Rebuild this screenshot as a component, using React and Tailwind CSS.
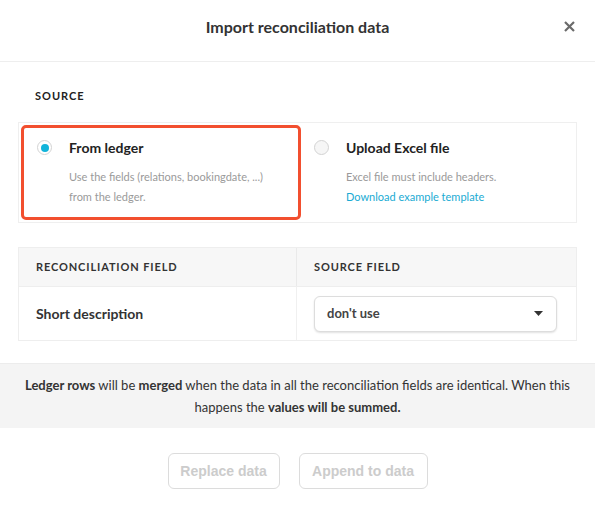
import React from "react";

function Radio({ checked }) {
  return (
    <span
      className={`flex h-[15px] w-[15px] shrink-0 items-center justify-center rounded-full border border-[#d3d3d3] ${
        checked ? "bg-white" : "bg-[#f6f6f6]"
      }`}
    >
      {checked && <span className="h-[8px] w-[8px] rounded-full bg-[#12b4da]" />}
    </span>
  );
}

export default function App() {
  return (
    <div className="h-[509px] w-[595px] overflow-hidden bg-white font-['Lato','Noto_Sans',sans-serif] text-[#333]">
      <div className="flex h-[62px] items-center border-b border-[#eeeeee] pb-[8px] pl-[20px] pr-[20px]">
        <div className="w-[12px]" />
        <div className="flex-1 text-center text-[16px] font-bold leading-[20px] text-[#333]">
          Import reconciliation data
        </div>
        <div className="flex w-[12px] items-center justify-center">
          <svg width="11" height="11" viewBox="0 0 11 11">
            <path d="M1 1 L10 10 M10 1 L1 10" stroke="#6b6b6b" strokeWidth="2.2" />
          </svg>
        </div>
      </div>

      <div className="px-[18px]">
        <div className="pl-[17px] pt-[27px] text-[11px] font-bold leading-[14px] tracking-[0.09em] text-[#222]">
          SOURCE
        </div>

        <div className="mt-[19px] flex h-[101px] border border-[#efefef]">
          <div className="ml-[2px] mt-[2px] flex h-[95px] w-[280px] gap-[17px] rounded-[5px] border-[3px] border-[#f24f2f] pl-[13px] pt-[10px]">
            <div className="pt-[2px]">
              <Radio checked />
            </div>
            <div>
              <div className="text-[14px] font-bold leading-[20px] text-[#222]">From ledger</div>
              <div className="mt-[9px] text-[11px] leading-[20px] text-[#9a9a9a]">
                Use the fields (relations, bookingdate, ...)
                <br />
                from the ledger.
              </div>
            </div>
          </div>
          <div className="flex flex-1 gap-[17px] pl-[13px] pt-[15px]">
            <div className="pt-[2px]">
              <Radio />
            </div>
            <div>
              <div className="text-[14px] font-bold leading-[20px] text-[#222]">Upload Excel file</div>
              <div className="mt-[9px] text-[11px] leading-[20px] text-[#9a9a9a]">
                Excel file must include headers.
              </div>
              <div className="text-[11px] leading-[20px] text-[#1aabd3]">Download example template</div>
            </div>
          </div>
        </div>

        <div className="mt-[24px] border border-[#eeeeee]">
          <div className="flex h-[38px] bg-[#f7f7f7] text-[11px] font-bold leading-[14px] tracking-[0.08em] text-[#333]">
            <div className="flex w-[278px] items-center border-r border-[#eaeaea] pl-[17px]">
              RECONCILIATION FIELD
            </div>
            <div className="flex flex-1 items-center pl-[17px]">SOURCE FIELD</div>
          </div>
          <div className="flex h-[54px] border-t border-[#eeeeee]">
            <div className="flex w-[278px] items-center border-r border-[#f0f0f0] pl-[17px] text-[14px] font-bold text-[#333]">
              Short description
            </div>
            <div className="flex flex-1 items-center pl-[17px]">
              <div className="flex h-[36px] w-[243px] items-center justify-between rounded-[6px] border border-[#dddddd] bg-white pl-[12px] pr-[13px] shadow-[0_1px_2px_rgba(0,0,0,0.12)]">
                <span className="text-[13px] font-bold text-[#444]">don't use</span>
                <svg width="9" height="5" viewBox="0 0 9 5">
                  <path d="M0 0 H9 L4.5 5 Z" fill="#333" />
                </svg>
              </div>
            </div>
          </div>
        </div>
      </div>

      <div className="mt-[22px] flex h-[65px] flex-col items-center justify-center border-t border-[#ececec] bg-[#f4f4f4] px-[20px] text-center text-[13px] leading-[22px] text-[#333]">
        <p>
          <b>Ledger rows</b> will be <b>merged</b> when the data in all the reconciliation fields are identical. When this
          happens the <b>values will be summed.</b>
        </p>
      </div>

      <div className="mt-[25px] flex justify-center gap-[19px] font-['Liberation_Sans',Arial,sans-serif]">
        <button className="h-[36px] w-[112px] rounded-[6px] border border-[#dcdcdc] bg-white text-[14px] font-bold text-[#cccccc]">
          Replace data
        </button>
        <button className="h-[36px] w-[129px] rounded-[6px] border border-[#dcdcdc] bg-white text-[14px] font-bold text-[#cccccc]">
          Append to data
        </button>
      </div>
    </div>
  );
}
